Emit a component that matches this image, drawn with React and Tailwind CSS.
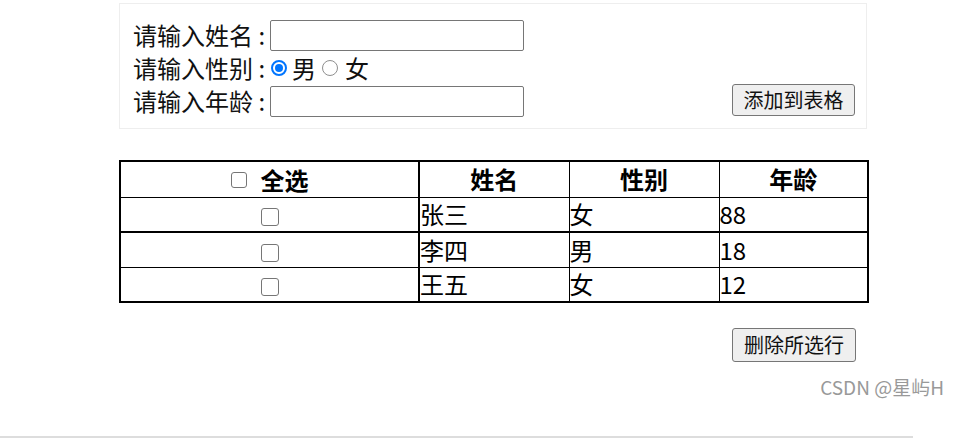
import React from "react";

const font = { fontFamily: '"Noto Sans CJK SC", "Noto Sans", sans-serif' };

function Box({ size = "w-[18px] h-[18px]" }) {
  return <span className={`inline-block shrink-0 align-middle ${size} border border-[#767676] rounded-[3px] bg-white`} />;
}

export default function App() {
  const rows = [
    ["张三", "女", "88"],
    ["李四", "男", "18"],
    ["王五", "女", "12"],
  ];
  return (
    <div className="relative w-[953px] h-[444px] bg-white text-black overflow-hidden" style={font}>
      <div className="flex flex-col pl-[119px] pt-[3px]">
        {/* form box */}
        <div className="w-[748px] h-[126px] border border-[#eeeeee] pl-[13px] pr-[11px] pt-[14px] flex justify-between items-end pb-[11px]">
          <div className="flex flex-col text-[24px] leading-none text-[#111]">
            <div className="flex items-center h-[32px]">
              <span className="w-[137px] shrink-0 whitespace-nowrap">请输入姓名 :</span>
              <input className="w-[254px] h-[31px] shrink-0 border border-[#767676] rounded-[2px] bg-white" />
            </div>
            <div className="flex items-center h-[34px]">
              <span className="w-[137px] shrink-0 whitespace-nowrap">请输入性别 :</span>
              <span className="shrink-0 ml-[1px] w-[16px] h-[16px] rounded-full border-2 border-[#0075ff] p-[2px] bg-white flex">
                <span className="w-full h-full rounded-full bg-[#0075ff]" />
              </span>
              <span className="ml-[5px]">男</span>
              <span className="shrink-0 ml-[6px] w-[16px] h-[16px] rounded-full border border-[#8f8f8f] bg-white" />
              <span className="ml-[7px]">女</span>
            </div>
            <div className="flex items-center h-[32px]">
              <span className="w-[137px] shrink-0 whitespace-nowrap">请输入年龄 :</span>
              <input className="w-[254px] h-[31px] shrink-0 border border-[#767676] rounded-[2px] bg-white" />
            </div>
          </div>
          <button className="w-[123px] h-[32px] border border-[#767676] rounded-[3px] bg-[#efefef] text-[20px] leading-none text-[#111] mb-[1px]">
            添加到表格
          </button>
        </div>

        {/* table */}
        <table className="mt-[31px] w-[748px] border-collapse border-2 border-black text-[24px] leading-none table-fixed">
          <colgroup>
            <col className="w-[299px]" />
            <col className="w-[150px]" />
            <col className="w-[150px]" />
            <col className="w-[149px]" />
          </colgroup>
          <thead>
            <tr className="h-[36px]">
              <th className="border border-black border-r-2 font-bold">
                <span className="inline-flex items-center gap-[14px]">
                  <Box size="w-[16px] h-[16px]" />
                  全选
                </span>
              </th>
              <th className="border border-black font-bold">姓名</th>
              <th className="border border-black font-bold">性别</th>
              <th className="border border-black font-bold">年龄</th>
            </tr>
          </thead>
          <tbody>
            {rows.map((r, i) => (
              <tr key={i} className={i === 0 ? "h-[35px] border-b-2 border-black" : "h-[35px]"}>
                <td className="border border-black border-r-2 text-center">
                  <Box />
                </td>
                <td className="border border-black text-left p-0">{r[0]}</td>
                <td className="border border-black text-left p-0">{r[1]}</td>
                <td className="border border-black text-left p-0">{r[2]}</td>
              </tr>
            ))}
          </tbody>
        </table>

        <div className="w-[748px] flex justify-end pr-[11px] mt-[25px]">
          <button className="w-[124px] h-[34px] border border-[#767676] rounded-[3px] bg-[#efefef] text-[20px] leading-none text-[#111]">
            删除所选行
          </button>
        </div>
      </div>

      <div className="absolute right-[9px] top-[374px] text-[19px] text-[#999] leading-[26px]">
        CSDN @星屿H
      </div>
      <div className="absolute left-0 top-[436px] w-[913px] h-[2px] bg-[#dddddd]" />
    </div>
  );
}
